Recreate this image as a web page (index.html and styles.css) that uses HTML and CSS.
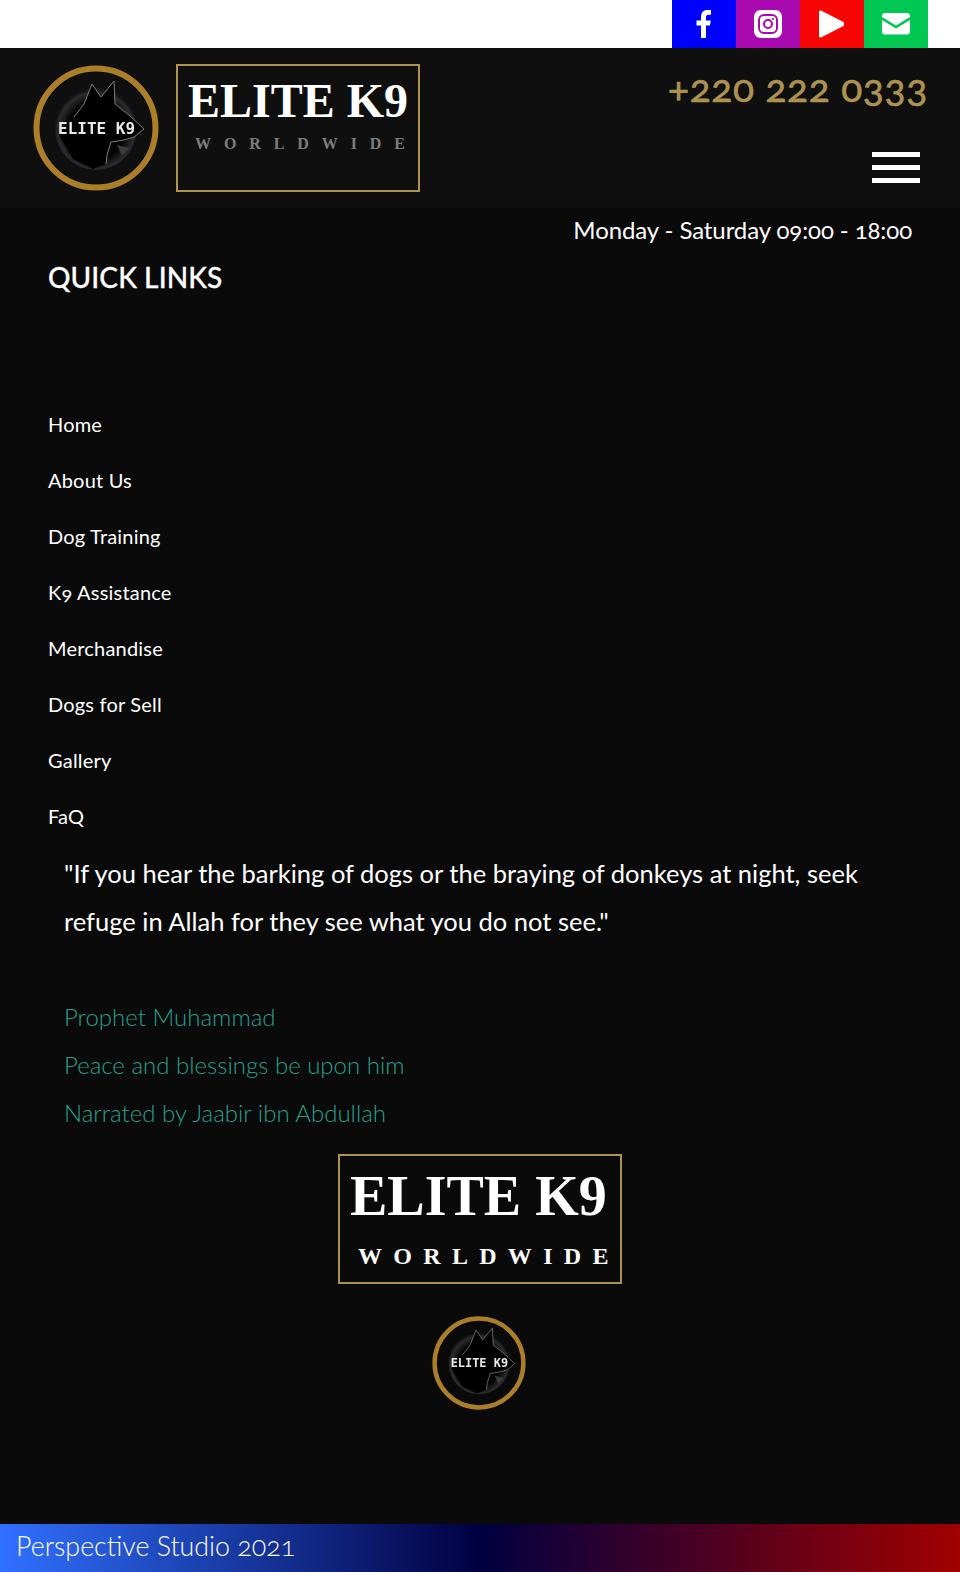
FILE: index.html
```html
<!DOCTYPE html>
<html>
<head>
  <title>Elite K9 Worldwide</title>
  <link rel="stylesheet" href="styles.css">
</head>
<body>
  <svg class="defs" width="0" height="0">
    <defs>
      <radialGradient id="ball" cx="50%" cy="52%" r="50%">
        <stop offset="0" stop-color="#000"/>
        <stop offset="0.7" stop-color="#050505"/>
        <stop offset="0.93" stop-color="#2c2c2c"/>
        <stop offset="1" stop-color="#161616"/>
      </radialGradient>
      <filter id="soft"><feGaussianBlur stdDeviation="0.35"/></filter>
      <symbol id="logo" viewBox="0 0 126 126">
        <circle cx="63" cy="63" r="59.5" fill="none" stroke="#ab7f2a" stroke-width="6"/>
        <circle cx="63" cy="64" r="41" fill="url(#ball)"/>
        <path d="M59 19 L68 32 L81 16 L82 39 L96 50 L111 64 L101 72 L91 75 L78 77 L74 90 L73 99 L60 104 L40 94 L26 70 L41 52 L51 39 Z" fill="#000"/>
        <path d="M41 52 L51 39 L59 19 L68 32 L81 16 L82 39 L96 50 L111 64 L101 72 L91 75 L78 77 L74 90 L73 99" fill="none" stroke="#8a8a8a" stroke-width="0.9" filter="url(#soft)"/>
        <path d="M84 80 L96 83 L89 91 Z" fill="#3c3c3c"/>
        <text class="logo-text" x="25" y="69" filter="url(#soft)">ELITE K9</text>
      </symbol>
    </defs>
  </svg>

  <div class="topbar">
    <a class="social fb" href="#">
      <svg width="28" height="28" viewBox="0 0 28 28"><path d="M11 28 V15.5 H6.5 V10.5 H11 V7 C11 2.500 13.500 0 17.500 0 H21 V4.800 H18.500 C16.500 4.800 16 5.800 16 7.500 V10.5 H20.800 L20 15.500 H16 V28 Z" fill="#fff"/></svg>
    </a>
    <a class="social ig" href="#">
      <svg width="28" height="28" viewBox="0 0 28 28"><rect width="28" height="28" rx="6.500" fill="#fff"/><rect x="5" y="5" width="18" height="18" rx="5" fill="none" stroke="#a90ab0" stroke-width="2"/><circle cx="14" cy="14" r="4" fill="none" stroke="#a90ab0" stroke-width="2"/><circle cx="19" cy="9" r="1.100" fill="#a90ab0"/></svg>
    </a>
    <a class="social yt" href="#">
      <svg width="26" height="28" viewBox="0 0 26 28"><path d="M2 .5 L24.500 12 Q26 14 24.500 16 L2 27.500 Q0 28 0 26 V2 Q0 0 2 .5 Z" fill="#fff"/></svg>
    </a>
    <a class="social mail" href="#">
      <svg width="28" height="22" viewBox="0 0 28 22"><path d="M3 0 H25 Q28 0 28 3 V4 L14 12.500 L0 4 V3 Q0 0 3 0 Z M0 7 L14 15.500 L28 7 V18.500 Q28 21.500 25 21.500 H3 Q0 21.500 0 18.500 Z" fill="#fff"/></svg>
    </a>
  </div>

  <header class="header">
    <svg class="logo-big"><use href="#logo"/></svg>
    <div class="brand">
      <div class="brand-name">ELITE K9</div>
      <div class="brand-sub">WORLDWIDE</div>
    </div>
    <div class="header-right">
      <div class="phone">+220 222 0333</div>
      <div class="burger"><span></span><span></span><span></span></div>
    </div>
  </header>

  <div class="hours">Monday - Saturday 09:00 - 18:00</div>

  <section class="links">
    <h2>QUICK LINKS</h2>
    <ul>
      <li><a href="#">Home</a></li>
      <li><a href="#">About Us</a></li>
      <li><a href="#">Dog Training</a></li>
      <li><a href="#">K9 Assistance</a></li>
      <li><a href="#">Merchandise</a></li>
      <li><a href="#">Dogs for Sell</a></li>
      <li><a href="#">Gallery</a></li>
      <li><a href="#">FaQ</a></li>
    </ul>
  </section>

  <section class="quote">
    <p class="quote-text">"If you hear the barking of dogs or the braying of donkeys at night, seek refuge in Allah for they see what you do not see."</p>
    <p class="quote-by">Prophet Muhammad</p>
    <p class="quote-by">Peace and blessings be upon him</p>
    <p class="quote-by">Narrated by Jaabir ibn Abdullah</p>
  </section>

  <div class="bottom-brand">
    <div class="bottom-box">
      <div class="bottom-name">ELITE K9</div>
      <div class="bottom-sub">WORLDWIDE</div>
    </div>
    <svg class="logo-small"><use href="#logo"/></svg>
  </div>

  <footer class="footer">Perspective Studio 2021</footer>
</body>
</html>
```

FILE: styles.css
```css
* {
  box-sizing: border-box;
}

body {
  margin: 0;
  height: 1572px;
  overflow: hidden;
  background-color: #0a0a0a;
  color: #fff;
  font-family: Lato, "Open Sans", sans-serif;
  font-variant-numeric: oldstyle-nums;
}

a {
  color: inherit;
  text-decoration: none;
}

.defs {
  position: absolute;
}

.logo-text {
  font-family: "DejaVu Sans Mono", monospace;
  font-size: 16px;
  font-weight: bold;
  fill: #e8e8e8;
}

.topbar {
  height: 48px;
  background-color: #fff;
  display: flex;
  justify-content: flex-end;
  padding-right: 32px;
}

.social {
  width: 64px;
  display: flex;
  align-items: center;
  justify-content: center;
}

.fb { background-color: #0000ff; }
.ig { background-color: #a90ab0; }
.yt { background-color: #f70404; }
.mail { background-color: #00c853; }

.header {
  height: 160px;
  background-color: #0f0f0f;
  display: flex;
  padding: 16px 32px;
}

.logo-big {
  width: 126px;
  height: 126px;
  margin: 1px 0 0 1px;
}

.brand {
  width: 244px;
  height: 128px;
  margin-left: 17px;
  border: 2px solid #ae9350;
  padding: 0 10px;
}

.brand-name {
  font-family: "Liberation Serif", serif;
  font-weight: bold;
  font-size: 48px;
  line-height: 66px;
  white-space: nowrap;
  margin-top: 2px;
}

.brand-sub {
  font-family: "Liberation Serif", serif;
  font-weight: bold;
  font-size: 16px;
  letter-spacing: 12.900px;
  line-height: 20px;
  color: #7d7d7d;
  margin-left: 7px;
  white-space: nowrap;
}

.header-right {
  margin-left: auto;
  text-align: right;
}

.phone {
  font-size: 39px;
  color: #ae9350;
  -webkit-text-stroke: 0.6px #ae9350;
  line-height: 46px;
  letter-spacing: 0.650px;
}

.burger {
  width: 48px;
  margin: 42px 8px 0 auto;
}

.burger span {
  display: block;
  height: 5px;
  background-color: #fff;
  margin-bottom: 8px;
}

.hours {
  font-size: 24px;
  letter-spacing: -0.1px;
  line-height: 44px;
  text-align: right;
  padding-right: 48px;
}

.links {
  padding: 0 48px;
}

.links h2 {
  margin: 0;
  font-size: 28px;
  letter-spacing: 0.1px;
  -webkit-text-stroke: 0.3px #fff;
  font-weight: 500;
  line-height: 50px;
}

.links ul {
  list-style: none;
  margin: 94px 0 0;
  padding: 0;
}

.links li {
  font-size: 20px;
  letter-spacing: 0.2px;
  line-height: 56px;
}

.quote {
  padding: 5px 64px 0;
}

.quote-text {
  margin: 0 0 48px;
  font-size: 25.500px;
  line-height: 48px;
}

.quote-by {
  margin: 0;
  font-size: 24px;
  font-weight: 300;
  line-height: 48px;
  color: #28a08c;
}

.bottom-brand {
  display: flex;
  flex-direction: column;
  align-items: center;
  margin-top: 17px;
}

.bottom-box {
  width: 284px;
  height: 130px;
  border: 2px solid #ae9350;
  padding: 0 10px;
}

.bottom-name {
  font-family: "Liberation Serif", serif;
  font-weight: bold;
  font-size: 56px;
  line-height: 80px;
  white-space: nowrap;
}

.bottom-sub {
  font-family: "Liberation Serif", serif;
  font-weight: bold;
  font-size: 24px;
  letter-spacing: 11.300px;
  line-height: 32px;
  margin: 4px 0 0 8px;
  white-space: nowrap;
}

.logo-small {
  width: 94px;
  height: 94px;
  margin: 32px 2px 0 0;
}

.footer {
  position: absolute;
  left: 0;
  right: 0;
  top: 1524px;
  height: 48px;
  padding-left: 16px;
  font-size: 26.800px;
  font-weight: 300;
  line-height: 44px;
  background-image: linear-gradient(to right, #3070ff, #000040 50%, #a00000);
}
```
